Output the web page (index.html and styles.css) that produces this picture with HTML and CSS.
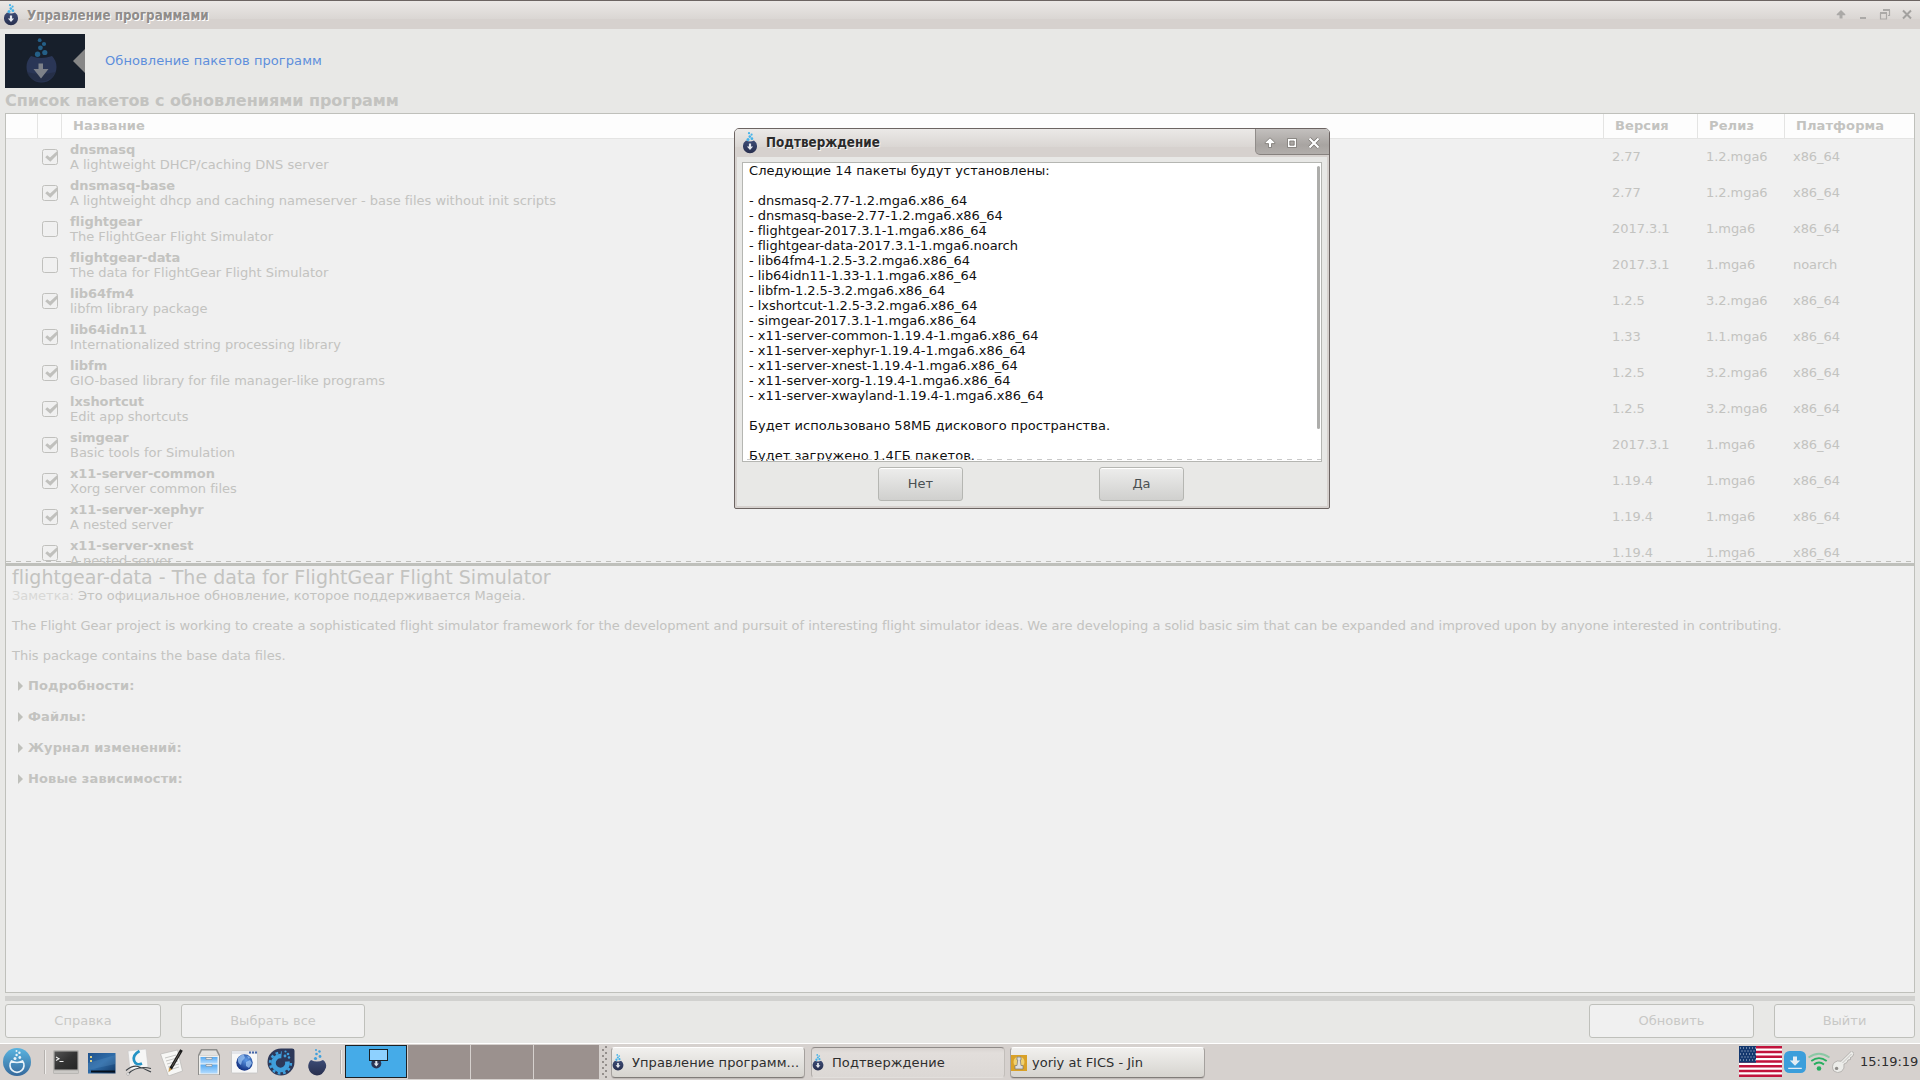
FILE: index.html
```html
<!DOCTYPE html>
<html lang="ru">
<head>
    <meta charset="UTF-8">
    <meta name="viewport" content="width=device-width, initial-scale=1.0">
    <title>Управление программами</title>
    <link rel="stylesheet" href="styles.css">
</head>
<body>
<!-- shared icons -->
<svg class="defs" width="0" height="0">
    <defs>
        <linearGradient id="g-nut" x1="0" y1="0" x2="0" y2="1"><stop offset="0" stop-color="#3c4b75"/><stop offset="1" stop-color="#282f4e"/></linearGradient>
        <linearGradient id="g-start" x1="0" y1="0" x2="0" y2="1"><stop offset="0" stop-color="#5ab4e0"/><stop offset="1" stop-color="#35699c"/></linearGradient>
        <linearGradient id="g-desk" x1="0" y1="0" x2="1" y2="1"><stop offset="0" stop-color="#20528c"/><stop offset=".5" stop-color="#2f6ca8"/><stop offset="1" stop-color="#123763"/></linearGradient>
        <linearGradient id="g-blue" x1="0" y1="0" x2="0" y2="1"><stop offset="0" stop-color="#55aaf2"/><stop offset="1" stop-color="#b4dcff"/></linearGradient>
        <linearGradient id="g-term" x1="0" y1="0" x2="1" y2="1"><stop offset="0" stop-color="#555"/><stop offset=".5" stop-color="#333"/><stop offset="1" stop-color="#262626"/></linearGradient>
        <radialGradient id="g-globe" cx=".6" cy=".35" r=".7"><stop offset="0" stop-color="#5d9be8"/><stop offset="1" stop-color="#0d2a7c"/></radialGradient>
    </defs>
    <symbol id="nut" viewBox="0 0 14 22">
        <path d="M3 8.6Q7 10.6 11 8.6A7 7 0 1 1 3 8.6Z" fill="url(#g-nut)"/>
        <g fill="#45b4ea"><circle cx="6" cy="1.2" r="1.1"/><circle cx="8.6" cy="2.6" r="1.1"/><circle cx="6.8" cy="4.6" r="1.3"/><circle cx="5" cy="7.4" r="1.5"/><circle cx="8.9" cy="6.7" r="1.4"/></g>
        <path d="M5.9 11.5h2.2v3h2L7 18l-3.1-3.500h2z" fill="#e6e9ef"/>
    </symbol>
    <symbol id="box" viewBox="0 0 16 16">
        <rect x=".5" y=".5" width="15" height="15" rx="2" fill="none" stroke="#c0c0bd"/>
    </symbol>
    <symbol id="checked" viewBox="0 0 16 16">
        <rect x=".5" y=".5" width="15" height="15" rx="2" fill="none" stroke="#c0c0bd"/>
        <path d="M3.200 8.200L5.200 6.200L8 8.400L15.500 1.800V5.500L8.300 12.800Z" fill="#c0c0bd"/>
    </symbol>
</svg>

<div class="screen">
    <div class="titlebar">
        <svg class="title-icon" width="14" height="22"><use href="#nut"/></svg>
        <span class="title-text">Управление программами</span>
        <svg class="title-buttons" width="76" height="12" viewBox="0 0 76 12">
            <path d="M5 1L9.300 5.200V6.200H6.500V9.500H3.500V6.200H.7V5.200Z" fill="#aba9a7"/>
            <path d="M24 8h6v2h-6z" fill="#aba9a7"/>
            <path d="M47.500 1.500h6v5h-1.500M44.500 4.500h6v5.500h-6z" fill="none" stroke="#aba9a7" stroke-width="1.200"/>
            <path d="M47 1h7M44 4h7" stroke="#aba9a7" stroke-width="2"/>
            <path d="M67 1.500l8 8M75 1.500l-8 8" stroke="#a3a19f" stroke-width="2"/>
        </svg>
    </div>

    <div class="banner">
        <svg class="banner-pic" width="80" height="54" viewBox="0 0 80 54">
            <rect width="80" height="54" fill="#171f2b"/>
            <path d="M26 22Q36 26 47 22A15 15.500 0 1 1 26 22Z" fill="#2a3656"/>
            <path d="M21.500 38A15 13 0 0 0 50.500 38Q36 42 21.500 38Z" fill="#232c40" opacity=".6"/>
            <g fill="#245f87"><circle cx="34.700" cy="6.200" r="1.900"/><circle cx="39" cy="10" r="2.100"/><circle cx="35.400" cy="13.800" r="2.400"/><circle cx="32.600" cy="20.300" r="2.700"/><circle cx="39.800" cy="18.500" r="2.600"/></g>
            <path d="M33.500 29.500h4.500V35h5.500L36 44.500L28.500 35h5z" fill="#7d8189"/>
            <path d="M80 15v24L68 27z" fill="#878787"/>
        </svg>
        <span class="banner-text">Обновление пакетов программ</span>
    </div>

    <div class="list-title">Список пакетов с обновлениями программ</div>

    <div class="list">
        <div class="row head"><span></span><span></span><span>Название</span><span>Версия</span><span>Релиз</span><span>Платформа</span></div>
        <div class="row"><i></i><svg class="check"><use href="#checked"/></svg><div class="name"><b>dnsmasq</b><span>A lightweight DHCP/caching DNS server</span></div><span>2.77</span><span>1.2.mga6</span><span>x86_64</span></div>
        <div class="row"><i></i><svg class="check"><use href="#checked"/></svg><div class="name"><b>dnsmasq-base</b><span>A lightweight dhcp and caching nameserver - base files without init scripts</span></div><span>2.77</span><span>1.2.mga6</span><span>x86_64</span></div>
        <div class="row"><i></i><svg class="check"><use href="#box"/></svg><div class="name"><b>flightgear</b><span>The FlightGear Flight Simulator</span></div><span>2017.3.1</span><span>1.mga6</span><span>x86_64</span></div>
        <div class="row"><i></i><svg class="check"><use href="#box"/></svg><div class="name"><b>flightgear-data</b><span>The data for FlightGear Flight Simulator</span></div><span>2017.3.1</span><span>1.mga6</span><span>noarch</span></div>
        <div class="row"><i></i><svg class="check"><use href="#checked"/></svg><div class="name"><b>lib64fm4</b><span>libfm library package</span></div><span>1.2.5</span><span>3.2.mga6</span><span>x86_64</span></div>
        <div class="row"><i></i><svg class="check"><use href="#checked"/></svg><div class="name"><b>lib64idn11</b><span>Internationalized string processing library</span></div><span>1.33</span><span>1.1.mga6</span><span>x86_64</span></div>
        <div class="row"><i></i><svg class="check"><use href="#checked"/></svg><div class="name"><b>libfm</b><span>GIO-based library for file manager-like programs</span></div><span>1.2.5</span><span>3.2.mga6</span><span>x86_64</span></div>
        <div class="row"><i></i><svg class="check"><use href="#checked"/></svg><div class="name"><b>lxshortcut</b><span>Edit app shortcuts</span></div><span>1.2.5</span><span>3.2.mga6</span><span>x86_64</span></div>
        <div class="row"><i></i><svg class="check"><use href="#checked"/></svg><div class="name"><b>simgear</b><span>Basic tools for Simulation</span></div><span>2017.3.1</span><span>1.mga6</span><span>x86_64</span></div>
        <div class="row"><i></i><svg class="check"><use href="#checked"/></svg><div class="name"><b>x11-server-common</b><span>Xorg server common files</span></div><span>1.19.4</span><span>1.mga6</span><span>x86_64</span></div>
        <div class="row"><i></i><svg class="check"><use href="#checked"/></svg><div class="name"><b>x11-server-xephyr</b><span>A nested server</span></div><span>1.19.4</span><span>1.mga6</span><span>x86_64</span></div>
        <div class="row"><i></i><svg class="check"><use href="#checked"/></svg><div class="name"><b>x11-server-xnest</b><span>A nested server</span></div><span>1.19.4</span><span>1.mga6</span><span>x86_64</span></div>
        <div class="more"></div>
    </div>

    <div class="details">
        <h1>flightgear-data - The data for FlightGear Flight Simulator</h1>
        <p><span class="note">Заметка: </span>Это официальное обновление, которое поддерживается Mageia.</p>
        <p class="long">The Flight Gear project is working to create a sophisticated flight simulator framework for the development and pursuit of interesting flight simulator ideas. We are developing a solid basic sim that can be expanded and improved upon by anyone interested in contributing.</p>
        <p>This package contains the base data files.</p>
        <div class="expander">Подробности:</div>
        <div class="expander">Файлы:</div>
        <div class="expander">Журнал изменений:</div>
        <div class="expander">Новые зависимости:</div>
    </div>

    <div class="splitter"></div>

    <div class="actions">
        <button class="help">Справка</button>
        <button class="all">Выбрать все</button>
        <button class="update">Обновить</button>
        <button class="quit">Выйти</button>
    </div>

    <div class="taskbar">
        <div class="launchers">
            <svg width="28" height="28" viewBox="0 0 28 28">
                <circle cx="14" cy="14" r="14" fill="url(#g-start)"/>
                <path d="M8.500 13Q14 16 19.500 13A7 7 0 1 1 8.500 13Z" fill="none" stroke="#e8f2f8" stroke-width="1.700"/>
                <g fill="#e8f2f8"><circle cx="13.500" cy="3" r="1"/><circle cx="16.400" cy="4.800" r="1.200"/><circle cx="13.600" cy="7" r="1.200"/><circle cx="12" cy="10.500" r="1.500"/><circle cx="16.800" cy="9.500" r="1.400"/></g>
            </svg>
            <i class="sep sep-1"></i>
            <svg class="term" width="28" height="28" viewBox="0 0 28 28">
                <rect x="1" y="2" width="26" height="24" rx="1.500" fill="#b9b7b4"/>
                <rect x="2.500" y="3.500" width="23" height="18" fill="url(#g-term)"/>
                <path d="M2 24h24" stroke="#dddbd8"/>
                <path d="M4 9l3 1.700L4 12.500M7.500 13.500h4" fill="none" stroke="#eee" stroke-width="1.100"/>
            </svg>
            <svg class="desk" width="28" height="28" viewBox="0 0 28 28">
                <rect y="5" width="27.500" height="20.500" fill="url(#g-desk)"/>
                <path d="M0 15L27.500 7v9L0 22z" fill="#5c95c7" opacity=".3"/>
                <rect x="3" y="22.500" width="24" height="2" fill="#04101e"/>
                <path d="M2 8h2v2H2zM2 12h2v2H2z" fill="#d8cf8b"/>
            </svg>
            <svg class="draw" width="28" height="28" viewBox="0 0 28 28">
                <path d="M3 3l18-2 2 18-18 3z" fill="#f6f6f6" stroke="#c9c9c9" stroke-width=".6"/>
                <path d="M14.500 3Q7.500 7 9 12.500Q11 18 17 15.500" fill="none" stroke="#2493c5" stroke-width="2.600"/>
                <path d="M1 22.500Q8 17 13 18.500T26 24M3 26Q12 17 26 20.500" fill="none" stroke="#3c4247" stroke-width="1.200"/>
                <circle cx="3" cy="26" r="1.300" fill="#fff" stroke="#888" stroke-width=".5"/>
            </svg>
            <svg class="note-icon" width="28" height="28" viewBox="0 0 28 28">
                <path d="M1.500 6l17-4 5 21-14 5z" fill="#f7f7f5" stroke="#b9b7b4" stroke-width=".7"/>
                <path d="M6 10l11-3M7 13l11-3M8 16l11-3M9 19l11-3M10 22l10-3" stroke="#c6c6c4"/>
                <path d="M22.500 2L11.500 21" stroke="#1a1a1a" stroke-width="3"/>
                <path d="M21 4.500L13 18.500" stroke="#6c665c" stroke-width=".8"/>
                <path d="M10 19.500l3 1.800-3.500 3z" fill="#c89a50"/>
            </svg>
            <svg class="files" width="28" height="28" viewBox="0 0 28 28">
                <path d="M6 1h16l3 6v20H3V7z" fill="#8f8f8d"/>
                <path d="M7 2.500h14l2.500 5h-19z" fill="#e2e2e0"/>
                <rect x="4" y="7.500" width="20" height="19" fill="#f1f1ef"/>
                <rect x="5.500" y="9" width="17" height="6.500" fill="url(#g-blue)"/><rect x="5.500" y="16.500" width="17" height="9" fill="url(#g-blue)"/>
                <path d="M11 9.500h6v1.800h-6zM11 16.500h6v1.800h-6z" fill="#f3f3f3" stroke="#777" stroke-width=".5"/>
            </svg>
            <svg class="web" width="28" height="28" viewBox="0 0 28 28">
                <rect x="1.500" y="3" width="26" height="22" rx="1" fill="#f7f7f7" stroke="#c4c4c4" stroke-width=".8"/>
                <path d="M2 3h25v3H2z" fill="#e3e5ea"/><path d="M19 3.500h2v2h-2zM22 3.500h2v2h-2zM25 3.500h2v2h-2z" fill="#4667a8"/>
                <circle cx="14.500" cy="14.500" r="8.200" fill="url(#g-globe)"/>
                <path d="M8 10q3-4 6-3l1 3-3 3-1 4q-4-2-3-7M16 14l4-2 2 3-3 5-3-2zM17 8l3 1-1 2z" fill="#9cc5f4" opacity=".75"/>
            </svg>
            <svg class="mcc" width="28" height="28" viewBox="0 0 28 28">
                <path d="M14 .5H25Q27.500 .5 27.500 3V14A13.500 13.500 0 1 1 14 .5Z" fill="#2d3859"/>
                <circle cx="13.500" cy="15" r="7" fill="none" stroke="#3f9edb" stroke-width="4.600"/>
                <circle cx="13.500" cy="15" r="10.300" fill="none" stroke="#3f9edb" stroke-width="2.700" stroke-dasharray="2.700"/>
                <path d="M14 14L15 1h12v12z" fill="#2d3859"/>
                <g fill="#3f9edb"><circle cx="18.500" cy="3.500" r="1.100"/><circle cx="21" cy="6" r="1.300"/><circle cx="18" cy="8" r="1.400"/><circle cx="22" cy="9.500" r="1.200"/></g>
            </svg>
            <svg class="coco" width="28" height="28" viewBox="0 0 28 28">
                <path d="M8 12Q14 15 20 12Q24 15 23 19.500Q20 27.500 14 27.500Q7 27 5.300 19.500Q4.800 15 8 12Z" fill="url(#g-nut)"/>
                <g fill="#3fa0dc"><circle cx="13" cy="2" r="1"/><circle cx="16.500" cy="3.500" r="1.200"/><circle cx="13.500" cy="6" r="1.300"/><circle cx="17" cy="8.500" r="1.400"/><circle cx="12.500" cy="10.500" r="1.600"/></g>
            </svg>
            <i class="sep sep-2"></i>
        </div>

        <div class="pager">
            <div class="desktop active">
                <svg width="20" height="22" viewBox="0 0 20 22">
                    <circle cx="7.300" cy="14.500" r="5" fill="#2b3554"/>
                    <path d="M6.300 12h2v2.500h1.500L7.300 17.500L4.800 14.500h1.500z" fill="#e0e6ee"/>
                    <rect x=".5" y=".5" width="18" height="11" fill="#8ed1ff" stroke="#1b2024"/>
                </svg>
            </div>
            <div class="desktop"></div>
            <div class="desktop"></div>
            <div class="desktop last"></div>
        </div>

        <i class="grip"></i>

        <div class="task"><svg width="12" height="17"><use href="#nut"/></svg><span>Управление программ...</span></div>
        <div class="task pressed"><svg width="12" height="17"><use href="#nut"/></svg><span>Подтверждение</span></div>
        <div class="task jin">
            <svg width="16" height="16" viewBox="0 0 16 16">
                <rect width="16" height="16" fill="#d9a128"/>
                <circle cx="8" cy="7" r="5.500" fill="#efd070"/>
                <path d="M6 2h4v3H9.300l.7 5.500H12V14H4v-3.500h2L6.700 5H6z" fill="#dedede" stroke="#777" stroke-width=".7"/>
            </svg>
            <span>yoriy at FICS - Jin</span>
        </div>

        <div class="tray">
            <svg width="43" height="31" viewBox="0 0 43 31">
                <rect width="43" height="31" fill="#fff"/>
                <path d="M0 1.200h43M0 6h43M0 10.700h43M0 15.500h43M0 20.300h43M0 25h43M0 29.800h43" stroke="#c1133c" stroke-width="2.400"/>
                <rect width="17" height="16.700" fill="#14386f"/>
                <path d="M1 2h16M1 8h16M1 14h16" stroke="#c7d2e2" stroke-dasharray="1 2"/><path d="M2.500 5h14M2.500 11h14" stroke="#c7d2e2" stroke-dasharray="1 2"/>
            </svg>
            <svg width="22" height="22" viewBox="0 0 22 22">
                <rect width="22" height="22" rx="5.500" fill="#3b9edb"/>
                <path d="M9 5.500h4v4h3.200L11 14.800L5.800 9.500H9zM4.200 16.800h13.600v1.300H4.200z" fill="#e3edf4"/>
            </svg>
            <svg width="22" height="22" viewBox="0 0 22 22">
                <g fill="none" stroke-width="1.800"><path d="M.5 6.500Q11-1 21.500 6.500" stroke="#8cc8a5"/><path d="M3.300 10Q11 4.300 18.700 10M6 13.500Q11 9.500 16 13.500" stroke="#27ae60"/></g>
                <circle cx="11" cy="17.500" r="2.300" fill="#27ae60"/>
            </svg>
            <svg width="22" height="22" viewBox="0 0 22 22">
                <path d="M19.500 0L22 2.300L20.500 5.500L18.500 6.500V8.500L16 9L15 11.500L12 13Q13 17.500 9.500 20.500Q5.500 23 1.800 20Q-1 15.500 2.300 11.500Q5.500 9 9 10.300Z" fill="#ecece9" stroke="#a3a19e" stroke-width=".7"/>
                <path d="M19.500 3L10.500 12" stroke="#c3c1be"/><circle cx="4.600" cy="17.400" r="1.700" fill="#8e8c89"/>
            </svg>
            <span class="clock">15:19:19</span>
        </div>
    </div>

    <!-- confirmation window -->
    <div class="dialog">
        <div class="dialog-title">
            <svg width="14" height="22"><use href="#nut"/></svg>
            <span>Подтверждение</span>
            <div class="dialog-buttons">
                <svg width="56" height="12" viewBox="0 0 56 12">
                    <g stroke="#77736f" stroke-width=".8" fill="#fff">
                        <path d="M6 .8L10.800 5.400V6.600H7.500V10.500H4.500V6.600H1.200V5.400Z"/>
                        <path d="M23.500 1.500h9v9h-9zM25.800 4v4.200h4.400V4z" fill-rule="evenodd"/>
                    </g>
                    <path d="M45.500 1.500l9 9M54.500 1.500l-9 9" stroke="#77736f" stroke-width="3.600"/>
                    <path d="M45.500 1.500l9 9M54.500 1.500l-9 9" stroke="#fff" stroke-width="2.200"/>
                </svg>
            </div>
        </div>
        <div class="dialog-body">
            <div class="message"><span class="ru">Следующие 14 пакеты будут установлены:</span>

- dnsmasq-2.77-1.2.mga6.x86_64
- dnsmasq-base-2.77-1.2.mga6.x86_64
- flightgear-2017.3.1-1.mga6.x86_64
- flightgear-data-2017.3.1-1.mga6.noarch
- lib64fm4-1.2.5-3.2.mga6.x86_64
- lib64idn11-1.33-1.1.mga6.x86_64
- libfm-1.2.5-3.2.mga6.x86_64
- lxshortcut-1.2.5-3.2.mga6.x86_64
- simgear-2017.3.1-1.mga6.x86_64
- x11-server-common-1.19.4-1.mga6.x86_64
- x11-server-xephyr-1.19.4-1.mga6.x86_64
- x11-server-xnest-1.19.4-1.mga6.x86_64
- x11-server-xorg-1.19.4-1.mga6.x86_64
- x11-server-xwayland-1.19.4-1.mga6.x86_64

<span class="ru">Будет использовано 58МБ дискового пространства.</span>

<span class="ru">Будет загружено 1.4ГБ пакетов.</span></div>
            <i class="scroll"></i>
            <i class="message-more"></i>
        </div>
        <div class="answers">
            <button>Нет</button>
            <button>Да</button>
        </div>
    </div>
</div>
</body>
</html>
```
FILE: styles.css
```css
* {
    box-sizing: border-box;
}

body {
    margin: 0;
    background: #e8e8e6;
    font-family: "DejaVu Sans", sans-serif;
    font-size: 13px;
    line-height: 15px;
    color: #c3c3c0;
}

button {
    font: inherit;
    padding: 0 0 2px;
}

svg {
    display: block;
    flex: none;
}

.defs {
    position: absolute;
}

.screen {
    position: relative;
    width: 1920px;
    height: 1080px;
    overflow: hidden;
    display: flex;
    flex-direction: column;
}

/* Main window title */
.titlebar {
    height: 29px;
    flex: none;
    display: flex;
    align-items: center;
    padding: 0 8px 0 4px;
    border-top: 1px solid #6c6462;
    background: linear-gradient(#ebe8e6, #dad6d3 18px, #d6d1ce 18px);
}

.title-text {
    margin-left: 9px;
    font-family: "DejaVu Sans Condensed", "DejaVu Sans", sans-serif;
    font-stretch: semi-condensed;
    font-size: 13.33px;
    font-weight: bold;
    color: #8f8c8a;
    text-shadow: 1px 1px 0 #fff;
}

.title-buttons {
    margin-left: auto;
}

.banner {
    display: flex;
    align-items: center;
    height: 54px;
    margin: 5px 5px 0;
}

.banner-text {
    margin-left: 20px;
    padding-bottom: 2px;
    letter-spacing: 0.08px;
    color: #5e8fdc;
}

.list-title {
    height: 25px;
    line-height: 26px;
    padding-left: 5px;
    font-size: 16px;
    font-weight: bold;
    letter-spacing: -0.03px;
    flex: none;
}

/* Package list */
.list {
    position: relative;
    height: 452px;
    flex: none;
    margin: 0 5px;
    border: 1px solid #bfc0bb;
    border-bottom-width: 2px;
    background: #f0f0f0;
    overflow: hidden;
}

.row {
    display: grid;
    grid-template-columns: 32px 24px 1542px 94px 87px 1fr;
    height: 36px;
    align-items: center;
}

.row > span {
    padding: 0 0 2px 8px;
    letter-spacing: -0.05px;
}

.head {
    height: 25px;
    background: #fdfdfd;
    border-bottom: 1px solid #e4e4e3;
    font-weight: bold;
}

.row.head > span {
    height: 24px;
    line-height: 23px;
    padding: 0 0 0 11px;
    border-right: 1px solid #e4e4e3;
    letter-spacing: 0.1px;
}

.row.head > span:last-child {
    border-right: none;
}

.check {
    width: 16px;
    height: 16px;
    margin-left: 4px;
}

.name {
    display: flex;
    flex-direction: column;
    padding-left: 8px;
    letter-spacing: -0.01px;
}

.name b {
    letter-spacing: -0.06px;
}

.more {
    position: absolute;
    left: 0;
    right: 0;
    bottom: 1px;
    height: 1px;
    background: repeating-linear-gradient(90deg, #bfc0bb 0 5px, transparent 5px 10px);
}

/* Package details */
.details {
    height: 428px;
    flex: none;
    margin: 0 5px;
    padding: 1px 6px;
    border: 1px solid #bfc0bb;
    background: #f0f0f0;
}

.details h1 {
    height: 21px;
    margin: 0;
    font-size: 19px;
    font-weight: normal;
    line-height: 20px;
    letter-spacing: 0.02px;
}

.details p {
    margin: 0 0 15px;
    white-space: nowrap;
}

.details .long {
    letter-spacing: -0.02px;
}

.note {
    color: #d8d8d6;
}

.expander {
    display: flex;
    align-items: center;
    height: 31px;
    padding-left: 6px;
    font-weight: bold;
    letter-spacing: 0.12px;
}

.details p + .expander {
    margin-top: -8px;
}

.expander::before {
    content: "";
    margin-right: 5px;
    border-left: 5px solid #bfc0bb;
    border-top: 5px solid transparent;
    border-bottom: 5px solid transparent;
}

.splitter {
    height: 5px;
    flex: none;
    margin: 3px 5px;
    background: #d1d1cf;
}

.actions {
    display: flex;
    height: 39px;
    flex: none;
    padding: 0 5px;
    gap: 20px;
}

.actions button {
    height: 34px;
    border: 1px solid #bfc0bb;
    border-radius: 3px;
    background: #f0f0f0;
    color: #c8c8c6;
}

.help {
    width: 156px;
}

.all {
    width: 184px;
}

.update {
    width: 165px;
    margin-left: auto;
}

.quit {
    width: 141px;
}

/* Taskbar */
.taskbar {
    display: flex;
    height: 37px;
    flex: none;
    border-top: 1px solid #fff;
    background: #d6d1ce;
    color: #2e2e2e;
}

.launchers {
    display: flex;
    align-items: center;
    width: 345px;
    padding-left: 3px;
}

.sep {
    width: 2px;
    height: 24px;
    border-left: 1px solid #b5b1ae;
    border-right: 1px solid #efedeb;
}

.sep-1 {
    margin: 0 6px 0 13px;
}

.desk {
    margin-left: 8px;
}

.draw {
    margin-left: 9px;
}

.note-icon {
    margin-left: 6px;
}

.files {
    margin-left: 8px;
}

.web {
    margin-left: 7px;
}

.mcc {
    margin-left: 9px;
}

.coco {
    margin-left: 8px;
}

.sep-2 {
    margin-left: 9px;
}

.pager {
    display: flex;
    gap: 1px;
    padding-top: 1px;
}

.desktop {
    width: 62px;
    height: 34px;
    background: #9b918e;
}

.desktop.active {
    height: 33px;
    border: 1px solid #1b2024;
    background: #45abe8;
    padding: 3px 0 0 23px;
}

.desktop.last {
    width: 65px;
}

.grip {
    width: 5px;
    height: 32px;
    margin: 2px 4px 0 3px;
    background:
        radial-gradient(circle at 1px 1px, #928d8a .7px, transparent 1px) 0 3px / 6px 6px,
        radial-gradient(circle at 4px 4px, #928d8a .7px, transparent 1px) 0 3px / 6px 6px;
}

.task {
    display: flex;
    align-items: center;
    width: 194px;
    height: 31px;
    margin: 3px 6px 0 0;
    border: 1px solid #a5a19e;
    border-top-color: #fff;
    border-bottom-color: #807c79;
    border-radius: 4px;
    background: linear-gradient(#f1f0ee, #d6d4cf);
    box-shadow: 0 1px 0 #c0bbb8;
    font-size: 13px;
    white-space: nowrap;
}

.task span {
    margin-left: 8px;
    letter-spacing: 0.08px;
}

.task.pressed {
    border-color: #8f8b89 #c2beba #e2dfdc #b0aca9;
    background: linear-gradient(#d8d3d0, #e2dedb 5px, #dcd8d5);
    box-shadow: none;
}

.task.jin {
    width: 195px;
    margin-left: -1px;
}

.task.jin span {
    margin-left: 5px;
    letter-spacing: 0;
}

.tray {
    display: flex;
    align-items: center;
    gap: 2px;
    margin-left: auto;
    padding: 0 4px 1px 0;
}

.clock {
    margin-left: 4px;
    width: 56px;
    font-size: 13px;
    white-space: nowrap;
}

/* Dialog window */
.dialog {
    position: absolute;
    left: 734px;
    top: 128px;
    width: 596px;
    height: 381px;
    border: 1px solid #6c6462;
    border-radius: 5px 5px 2px 2px;
    background: #e8e8e6;
    box-shadow: inset 0 0 0 2px #d6d1ce;
    overflow: hidden;
}

.dialog-title {
    display: flex;
    align-items: center;
    height: 28px;
    padding-left: 8px;
    background: linear-gradient(#ebe9e7, #dad6d3 18px, #d6d1ce 18px);
    font-family: "DejaVu Sans Condensed", "DejaVu Sans", sans-serif;
    font-stretch: semi-condensed;
    font-size: 13.33px;
    font-weight: bold;
    color: #2b2b2b;
    text-shadow: 1px 1px 0 #f5f5f5;
}

.dialog-title > span {
    margin-left: 9px;
    padding-bottom: 1px;
}

.dialog-buttons {
    display: flex;
    align-items: center;
    align-self: flex-start;
    width: 74px;
    height: 26px;
    margin-left: auto;
    padding: 2px 0 0 8px;
    border-left: 1px solid #918d8a;
    border-bottom: 1px solid #87827f;
    border-bottom-left-radius: 5px;
    background: linear-gradient(#c3c0be, #a8a4a1 16px, #b2aeab);
}

.dialog-body {
    position: relative;
    height: 300px;
    margin: 5px 7px 0;
    border: 1px solid #b5b6b2;
    background: #fff;
    overflow: hidden;
}

.message {
    padding: 0 6px;
    white-space: pre;
    letter-spacing: -0.04px;
    color: #101010;
}

.ru {
    letter-spacing: 0.05px;
}

.scroll {
    position: absolute;
    top: 3px;
    right: 1px;
    width: 3px;
    height: 263px;
    border-radius: 2px;
    background: #adadab;
}

.message-more {
    position: absolute;
    left: 4px;
    right: 0;
    bottom: 1px;
    height: 1px;
    background: repeating-linear-gradient(90deg, #c9c9c9 0 5px, transparent 5px 10px);
}

.answers {
    display: flex;
    gap: 136px;
    padding: 5px 0 0 143px;
}

.answers button {
    width: 85px;
    height: 34px;
    border: 1px solid #b5b6b2;
    border-radius: 3px;
    background: linear-gradient(#ededec, #d0d0ce);
    box-shadow: inset 0 1px 0 #fff;
    color: #4a5052;
}
```
